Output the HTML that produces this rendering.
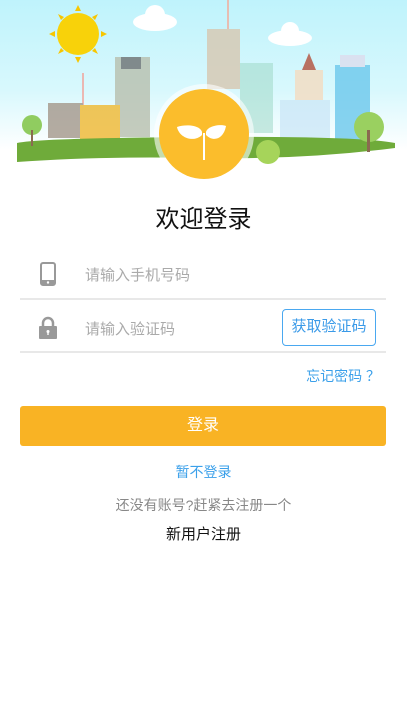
<!DOCTYPE html><html><head><meta charset="utf-8"><style>
*{margin:0;padding:0;box-sizing:border-box}
body{width:407px;height:723px;background:#fff;position:relative;overflow:hidden;font-family:"Liberation Sans","Noto Sans CJK SC",sans-serif}
.a{position:absolute}
.t{white-space:nowrap}
</style></head><body>
<div class="a" style="left:0;top:0;width:407px;height:190px;background:linear-gradient(#bff3fc 0,#d8f8fd 90px,#fff 150px)"></div>
<svg class="a" style="left:0;top:0" width="407" height="190">
<g fill="#f7c600"><circle cx="78" cy="34" r="21" fill="#f8d20a"/>
<path d="M78 5l3 6h-6zM78 63l3-6h-6zM49 34l6 3v-6zM107 34l-6 3v-6zM58 14l6 3-3 3zM98 14l-6 3 3 3zM58 54l6-3-3-3zM98 54l-6-3 3-3z"/></g>
<g fill="#fff"><ellipse cx="155" cy="22" rx="22" ry="9"/><circle cx="155" cy="15" r="10"/><ellipse cx="290" cy="38" rx="22" ry="8"/><circle cx="290" cy="31" r="9"/></g>
<g opacity=".8">
<rect x="82" y="73" width="2" height="35" fill="#f0a8a0"/>
<rect x="227" y="0" width="2" height="30" fill="#f0b0a0"/>
<rect x="207" y="29" width="33" height="60" fill="#d7c7b0"/>
<rect x="115" y="57" width="35" height="80" fill="#b8bfae"/><rect x="121" y="57" width="20" height="12" fill="#6d7070"/>
<rect x="240" y="63" width="33" height="70" fill="#9fd8c8" opacity=".7"/>
<rect x="48" y="103" width="35" height="35" fill="#a4978a"/>
<rect x="80" y="105" width="40" height="34" fill="#f0b830"/>
<rect x="295" y="70" width="28" height="70" fill="#f4dcc0"/><path d="M302 70l7-17 7 17z" fill="#b3503c"/>
<rect x="335" y="65" width="35" height="75" fill="#6cc8ec"/><rect x="340" y="55" width="25" height="12" fill="#dde"/>
<rect x="280" y="100" width="50" height="40" fill="#cde8f8"/>
</g>
<path d="M17 143Q40 138 200 137T395 143L395 148Q300 160 200 158T17 162z" fill="#6fab3a"/>
<circle cx="32" cy="125" r="10" fill="#90cc60"/><rect x="31" y="130" width="2" height="16" fill="#8a6a50"/>
<circle cx="369" cy="127" r="15" fill="#9ad060"/><rect x="367" y="130" width="3" height="22" fill="#8a6a50"/>
<circle cx="268" cy="152" r="12" fill="#a6d45a"/>
<circle cx="204" cy="134" r="50" fill="#fff" opacity=".6"/>
<circle cx="204" cy="134" r="45" fill="#fbbd2c"/>
<path d="M202 132C200 125 186 124 177 127C179 138 194 143 202 135z" fill="#fff"/>
<path d="M206 132C208 125 222 124 226 126C224 138 214 143 206 135z" fill="#fff"/>
<rect x="203" y="133" width="2" height="27" fill="#fff"/>
</svg>
<div class="a t" style="left:0;width:407px;top:199px;text-align:center;font-size:24px;color:#111">欢迎登录</div>
<svg class="a" style="left:40px;top:262px" width="16" height="24"><rect x="1" y="1" width="14" height="22" rx="2" fill="none" stroke="#999" stroke-width="2"/><rect x="1" y="18" width="14" height="5" fill="#999"/><circle cx="8" cy="20.5" r="1.2" fill="#fff"/></svg>
<div class="a t" style="left:85px;top:264px;font-size:15px;color:#aaa">请输入手机号码</div>
<div class="a" style="left:20px;top:298px;width:366px;height:2px;background:#e8e8e8"></div>
<svg class="a" style="left:38px;top:316px" width="20" height="23"><path d="M5 11V7a5 5 0 0 1 10 0v4" fill="none" stroke="#999" stroke-width="2.5"/><rect x="1" y="10" width="18" height="13" rx="1" fill="#999"/><circle cx="10" cy="15.5" r="1.5" fill="#fff"/><rect x="9.3" y="16" width="1.4" height="3" fill="#fff"/></svg>
<div class="a t" style="left:85px;top:318px;font-size:15px;color:#aaa">请输入验证码</div>
<div class="a t" style="left:282px;top:309px;width:94px;height:37px;border:1.5px solid #4aa8f0;border-radius:4px;font-size:15px;color:#3a9ae8;text-align:center;line-height:34px">获取验证码</div>
<div class="a" style="left:20px;top:351px;width:366px;height:2px;background:#e8e8e8"></div>
<div class="a t" style="right:27px;top:366px;font-size:14px;color:#3ba0ea">忘记密码 ？</div>
<div class="a t" style="left:20px;top:406px;width:366px;height:40px;background:#f9b324;border-radius:3px;color:#fff;font-size:16px;text-align:center;line-height:40px">登录</div>
<div class="a t" style="left:0;width:407px;top:462px;text-align:center;font-size:14px;color:#3ba0ea">暂不登录</div>
<div class="a t" style="left:0;width:407px;top:495px;text-align:center;font-size:14px;color:#888">还没有账号?赶紧去注册一个</div>
<div class="a t" style="left:0;width:407px;top:523px;text-align:center;font-size:15px;color:#111">新用户注册</div>
</body></html>
